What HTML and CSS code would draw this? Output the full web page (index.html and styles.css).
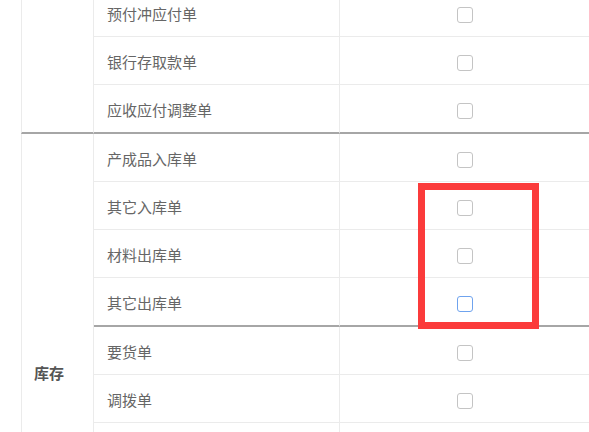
FILE: index.html
```html
<!DOCTYPE html>
<html lang="zh-CN">
<head>
<meta charset="utf-8">
<title>单据权限</title>
<link rel="stylesheet" href="styles.css">
</head>
<body>
<div class="page">
  <table class="perm-table">
    <colgroup>
      <col class="c-group">
      <col class="c-name">
      <col class="c-check">
    </colgroup>
    <tbody>
      <tr>
        <td class="group group-end" rowspan="3"></td>
        <td class="name">预付冲应付单</td>
        <td class="check"><span class="box"></span></td>
      </tr>
      <tr>
        <td class="name">银行存取款单</td>
        <td class="check"><span class="box"></span></td>
      </tr>
      <tr class="sub-end">
        <td class="name">应收应付调整单</td>
        <td class="check"><span class="box"></span></td>
      </tr>
      <tr>
        <td class="group" rowspan="7">库存</td>
        <td class="name">产成品入库单</td>
        <td class="check"><span class="box"></span></td>
      </tr>
      <tr>
        <td class="name">其它入库单</td>
        <td class="check"><span class="box"></span></td>
      </tr>
      <tr>
        <td class="name">材料出库单</td>
        <td class="check"><span class="box"></span></td>
      </tr>
      <tr class="sub-end">
        <td class="name">其它出库单</td>
        <td class="check"><span class="box hover"></span></td>
      </tr>
      <tr>
        <td class="name">要货单</td>
        <td class="check"><span class="box"></span></td>
      </tr>
      <tr>
        <td class="name">调拨单</td>
        <td class="check"><span class="box"></span></td>
      </tr>
      <tr class="filler">
        <td class="name"></td>
        <td class="check"></td>
      </tr>
    </tbody>
  </table>
  <div class="highlight"></div>
</div>
</body>
</html>
```

FILE: styles.css
```css
html, body {
  margin: 0;
  padding: 0;
  background: #fff;
  overflow: hidden;
}

.page {
  position: relative;
  width: 589px;
  height: 432px;
  overflow: hidden;
  font-family: "Noto Sans CJK SC", "Noto Sans", sans-serif;
}

.perm-table {
  margin: -11px 0 0 21px;
  width: 568px;
  table-layout: fixed;
  border-collapse: separate;
  border-spacing: 0;
  font-size: 15px;
  color: #666;
}

.c-group { width: 73px; }
.c-name { width: 246px; }
.c-check { width: 249px; }

.perm-table td {
  height: 48px;
  padding: 2px 0 0 0;
  box-sizing: border-box;
  border: 0;
  border-right: 1px solid #ebebeb;
  border-bottom: 1px solid #ebebeb;
  line-height: 20px;
  vertical-align: middle;
}

.perm-table tr.sub-end td {
  height: 49px;
}

.perm-table tr.filler td {
  height: 191px;
}

.perm-table td.name {
  padding-left: 13px;
  white-space: nowrap;
}

.perm-table td.check {
  text-align: center;
  border-right: 0;
}

.perm-table td.group {
  padding: 0 0 2px 12px;
  border-left: 1px solid #ebebeb;
  font-weight: bold;
  color: #555;
}

.perm-table td.group-end,
.perm-table tr.sub-end td {
  border-bottom: 2px solid #a6a6a6;
}

.box {
  display: inline-block;
  width: 16px;
  height: 16px;
  box-sizing: border-box;
  border: 1px solid #c4c4c4;
  border-radius: 3px;
  vertical-align: middle;
  background: #fff;
}

.box.hover {
  border-color: #6fa3ee;
}

.highlight {
  position: absolute;
  left: 418px;
  top: 183px;
  width: 121px;
  height: 146px;
  box-sizing: border-box;
  border: 7px solid #fb3b3b;
}
```
